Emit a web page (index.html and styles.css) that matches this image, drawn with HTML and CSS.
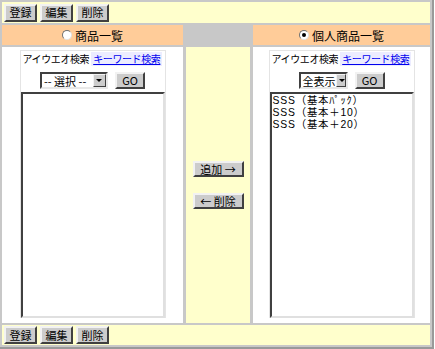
FILE: index.html
```html
<!DOCTYPE html>
<html lang="ja">
<head>
    <meta charset="UTF-8">
    <title>個人商品設定</title>
    <link rel="stylesheet" href="styles.css">
</head>
<body>
    <div class="page">
        <div class="bar">
            <button class="btn">登録</button>
            <button class="btn">編集</button>
            <button class="btn">削除</button>
        </div>

        <div class="head"><span class="radio"></span>商品一覧</div>
        <div class="head head-mid"></div>
        <div class="head"><span class="radio checked"></span>個人商品一覧</div>

        <div class="pane">
            <div class="search">
                <div class="tabs">
                    <span class="tab">アイウエオ検索</span>
                    <a class="tab tab-link" href="#">キーワード検索</a>
                </div>
                <div class="pick">
                    <span class="combo combo-wide"><span class="combo-text">-- 選択 --</span><span class="combo-btn"></span></span>
                    <button class="btn btn-go">GO</button>
                </div>
                <div class="list"></div>
            </div>
        </div>

        <div class="mid">
            <button class="btn btn-move">追加 →</button>
            <button class="btn btn-move">← 削除</button>
        </div>

        <div class="pane">
            <div class="search">
                <div class="tabs">
                    <span class="tab">アイウエオ検索</span>
                    <a class="tab tab-link" href="#">キーワード検索</a>
                </div>
                <div class="pick">
                    <span class="combo"><span class="combo-text">全表示</span><span class="combo-btn"></span></span>
                    <button class="btn btn-go">GO</button>
                </div>
                <div class="list">
                    <div class="item">SSS（基本ﾊﾟｯｸ）</div>
                    <div class="item">SSS（基本＋10）</div>
                    <div class="item">SSS（基本＋20）</div>
                </div>
            </div>
        </div>

        <div class="bar">
            <button class="btn">登録</button>
            <button class="btn">編集</button>
            <button class="btn">削除</button>
        </div>
    </div>
</body>
</html>
```

FILE: styles.css
```css
body { margin: 0; background: #fff; font-family: "Noto Sans CJK JP", "DejaVu Sans", sans-serif; font-size: 11px; color: #000; }
.page { display: grid; grid-template-columns: 181px 64px 177px; grid-template-rows: 21px 20px 276px 20px; gap: 2px 3px; width: 428px; padding: 2px; background: #c8c8c8; border-right: 2px solid #999; border-bottom: 2px solid #999; }
.bar { grid-column: 1 / -1; background: #ffffcc; display: flex; align-items: center; gap: 3px; padding: 0 2px; }
.btn { font-family: inherit; font-size: 11px; line-height: 1; padding: 0; background: #cccccc; color: #000; border: 2px solid; border-color: #f2f2f2 #404040 #404040 #f2f2f2; height: 18px; white-space: nowrap; }
.bar .btn { width: 33px; }
.head { background: #ffcc99; display: flex; align-items: center; justify-content: center; font-size: 12px; }
.head-mid { background: #c8c8c8; }
.radio { width: 8px; height: 8px; border: 1px solid; border-color: #707070 #e0e0e0 #e0e0e0 #707070; border-radius: 50%; background: #fff; margin-right: 3px; position: relative; }
.radio.checked::after { content: ""; position: absolute; left: 2px; top: 2px; width: 4px; height: 4px; border-radius: 50%; background: #000; }
.pane { background: #fff; padding-top: 3px; }
.search { width: 144px; margin: 0 auto; border: 1px solid #e4e4e4; border-bottom: none; }
.tabs { display: flex; height: 15px; align-items: center; font-size: 10px; letter-spacing: -0.4px; white-space: nowrap; }
.tab { padding: 0 2px; line-height: 14px; }
.tab-link { color: #0000ee; background: #ececff; text-decoration: underline; }
.pick { display: flex; justify-content: center; align-items: center; gap: 7px; margin-top: 6px; height: 17px; }
.combo { display: flex; align-items: center; width: 49px; height: 17px; box-sizing: border-box; border: 2px solid; border-color: #404040 #e8e8e8 #e8e8e8 #404040; background: #fff; font-size: 11px; }
.combo-wide { width: 68px; }
.combo-text { flex: 1; padding-left: 2px; white-space: pre; }
.combo-btn { width: 11px; height: 11px; background: #cccccc; border: 1px solid; border-color: #f2f2f2 #404040 #404040 #f2f2f2; position: relative; }
.combo-btn::after { content: ""; position: absolute; left: 2px; top: 4px; border-left: 3px solid transparent; border-right: 3px solid transparent; border-top: 3px solid #000; }
.btn-go { width: 30px; height: 17px; }
.list { height: 226px; margin-top: 3px; box-sizing: border-box; border: 2px solid; border-color: #404040 #e0e0e0 #e0e0e0 #404040; background: #fff; padding: 1px 1px; }
.item { line-height: 12px; font-family: "Liberation Sans", "Noto Sans CJK JP", sans-serif; font-size: 10.4px; letter-spacing: 0.8px; white-space: nowrap; }
.mid { background: #ffffcc; display: flex; flex-direction: column; align-items: center; justify-content: center; gap: 16px; }
.btn-move { width: 51px; height: 16px; }
```
